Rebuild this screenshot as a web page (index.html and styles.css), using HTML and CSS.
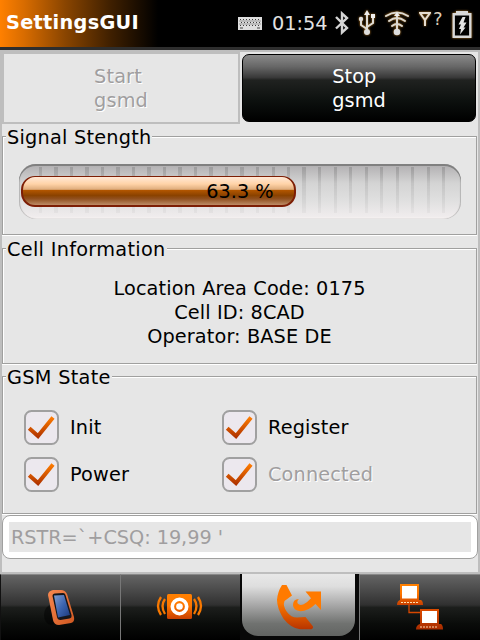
FILE: index.html
```html
<!DOCTYPE html>
<html lang="en">
<head>
<meta charset="utf-8">
<title>SettingsGUI</title>
<link rel="stylesheet" href="styles.css">
</head>
<body>
<header class="topbar">
  <h1 class="title">SettingsGUI</h1>
  <svg class="ic-keyboard" width="24" height="13" viewBox="0 0 24 13"><path fill="#dedede" d="M0 0h24v13H0z"/><path stroke="#404040" stroke-width="1" stroke-dasharray="1 2" d="M2 2.500h21M3 5.500h20M2 8.500h21"/><path stroke="#999" stroke-width="1" d="M1 4h22M1 7h22"/><path stroke="#444" d="M2 11h3M19 11h3"/></svg>
  <span class="clock">01:54</span>
  <svg class="ic-bt" width="16" height="26" viewBox="0 0 16 26"><path fill="none" stroke="#d4d4d4" stroke-width="2.400" d="M2 7L13 18L8 22.500V3.500L13 8L2 18.500"/></svg>
  <svg class="ic-usb glow" width="18" height="26" viewBox="0 0 18 26"><path fill="none" stroke="#dedbd4" stroke-width="2" d="M9 22V4M9 19l-6-4V9M9 17l6-4V6"/><circle cx="9" cy="22" r="3" fill="#ddd"/><circle cx="3" cy="9" r="2.200" fill="#ddd"/><path fill="#eee" d="M9 0l3 5H6zM13 4h4v4h-4z"/></svg>
  <svg class="ic-wifi glow" width="26" height="26" viewBox="0 0 26 26"><g fill="none" stroke="#dcd8d0" stroke-width="2" stroke-linecap="round"><path d="M2 6Q13-1 24 6M5 11q8-6 16 0M8 16q5-4 10 0M13 20V5"/></g><circle cx="13" cy="22" r="3.300" fill="#ddd"/><path fill="#eee" d="M13 2l3 4h-6z"/></svg>
  <svg class="ic-signal glow" width="12" height="16" viewBox="0 0 12 16"><path fill="none" stroke="#e5ddd0" stroke-width="2" d="M1 2h10L6 9zM6 8v7"/></svg>
  <span class="unknown">?</span>
  <svg class="ic-battery glow" width="20" height="28" viewBox="0 0 20 28"><path fill="#000" stroke="#d8d8d8" stroke-width="2.400" d="M1.700 3.200h16.600v22.600H1.700z"/><path fill="#d8d8d8" d="M4 0h12v3H4z"/><path fill="#e4e4e4" d="M10.500 6h3l-2 5.500h3l-3 5h2L8 23.500l1-5.500H7l2-4.500H6.500z"/></svg>
</header>
<main class="panel">
  <div class="actions">
    <button class="btn btn-off" disabled><span>Start<br>gsmd</span></button>
    <button class="btn btn-on"><span>Stop<br>gsmd</span></button>
  </div>
  <section class="group signal">
    <h2>Signal Stength</h2>
    <div class="track"><div class="stripes"></div><div class="fill" style="width:275px"></div><span class="pct">63.3 %</span></div>
  </section>
  <section class="group cell">
    <h2>Cell Information</h2>
    <p>Location Area Code: 0175<br>Cell ID: 8CAD<br>Operator: BASE DE</p>
  </section>
  <section class="group gsm">
    <h2>GSM State</h2>
    <div class="checks">
      <div class="check"><svg class="box" viewBox="0 0 35 35"><use href="#tick"/></svg><span>Init</span></div>
      <div class="check"><svg class="box" viewBox="0 0 35 35"><use href="#tick"/></svg><span>Register</span></div>
      <div class="check"><svg class="box" viewBox="0 0 35 35"><use href="#tick"/></svg><span>Power</span></div>
      <div class="check"><svg class="box" viewBox="0 0 35 35"><use href="#tick"/></svg><span class="dim">Connected</span></div>
    </div>
  </section>
  <div class="field"><div class="value">RSTR=`+CSQ: 19,99 '</div></div>
</main>
<nav class="tabs">
  <div class="tab"><svg width="120" height="66" viewBox="0 0 120 66"><ellipse cx="51" cy="41" rx="7" ry="10" fill="#000" opacity=".45"/><path fill="url(#phoneedge)" d="M48 21q0-4 5-5l8 0q4 0 6 4l7 23q1 5-3 6l-12 2q-5 0-6-5z"/><path fill="#14161c" d="M52.500 22q0-2.500 2.500-2.500l8-.5q2 0 2.500 2l6 20q.5 3-2 3.500l-9 1.500q-3 0-3.500-3z"/><path fill="url(#screen)" d="M54 21.500l10-.5 6 20-12 2.500z"/></svg></div>
  <div class="tab"><svg width="120" height="66" viewBox="0 0 120 66"><rect x="47" y="20" width="25" height="25" rx="1.500" fill="url(#org)"/><circle cx="59.500" cy="32.500" r="7.200" fill="none" stroke="#fff" stroke-width="3.600"/><circle cx="59.500" cy="32.500" r="3.300" fill="#fff"/><path fill="none" stroke="#f87800" stroke-width="2.300" d="M45 25q-5 7 0 15M41 23q-6 9 0 18M74 25q5 7 0 15M78 23q6 9 0 18"/></svg></div>
  <div class="tab active"><svg width="120" height="66" viewBox="0 0 120 66"><path fill="url(#org2)" d="M42 11h4.500l5.500 10.500-7.500 5.500q-2 5 2.500 11 4 5.500 10 5.500l8.500-.5 7.500 9.500v1.500l-1.500 1.200H60q-9-1-16.500-10.500Q37 34 37 26q.5-8 5-15z"/><path fill="#ff7a00" d="M65.500 17.500H81V36l-5.500-6q-7.500 7.300-15 7.300-7.500-.8-7.500-6.300 0-6 6-6-2.500 2-1.300 4.500 2 2.500 6 .7 3.800-2 7.300-6z"/></svg></div>
  <div class="tab last"><svg width="120" height="66" viewBox="0 0 120 66"><path fill="none" stroke="#d84800" stroke-width="1.300" d="M49 31v7.500h13"/><path fill="url(#org)" d="M40 10h19v16h2q2 1 2 5H37q0-4 3-5z"/><path fill="#fff" d="M42 12h15v12.500H42z"/><path stroke="#ffe0b0" stroke-width="1.200" stroke-dasharray="2 1" d="M41 28.500h17"/><path fill="url(#org3)" d="M60 35h19v15h2q2 1 2 5.500H56q0-4.500 4-5.500z"/><path fill="#fff" d="M62 37h15v12H62z"/><path stroke="#ffd8b0" stroke-width="1.200" stroke-dasharray="2 1" d="M60 53h18"/></svg></div>
</nav>
<svg class="defs" width="0" height="0"><defs>
  <linearGradient id="org" x2="0" y2="1"><stop stop-color="#ff8000"/><stop offset=".45" stop-color="#ff7700"/><stop offset="1" stop-color="#c83f00"/></linearGradient>
  <linearGradient id="org2" x2="0" y2="1"><stop offset=".4" stop-color="#ff7a00"/><stop offset="1" stop-color="#b83400"/></linearGradient>
  <linearGradient id="org3" x2="0" y2="1"><stop stop-color="#dc4c00"/><stop offset="1" stop-color="#a82c00"/></linearGradient>
  <linearGradient id="phoneedge" x2="1" y2="1"><stop stop-color="#f88850"/><stop offset="1" stop-color="#d05820"/></linearGradient>
  <linearGradient id="screen" x2="1" y2="1"><stop stop-color="#809dd0"/><stop offset=".5" stop-color="#3d65b0"/><stop offset="1" stop-color="#1c397c"/></linearGradient>
  <linearGradient id="tk" gradientUnits="userSpaceOnUse" x1="0" y1="7" x2="0" y2="29"><stop stop-color="#ff7d00"/><stop offset="1" stop-color="#a82c00"/></linearGradient>
  <g id="tick"><rect x="1" y="1" width="33" height="33" rx="6.500" fill="#ece8ee" stroke="#a0a0a0" stroke-width="2"/><path fill="none" stroke="url(#tk)" stroke-width="4" d="M5.200 18.200L14 26 29 7.500"/></g>
</defs></svg>
</body>
</html>
```
FILE: styles.css
```css
* { box-sizing: border-box; }
body {
  margin: 0;
  width: 480px;
  height: 640px;
  overflow: hidden;
  background: #000;
  color: #000;
  font: 19.3px/24px "DejaVu Sans", sans-serif;
}
svg { display: block; flex: none; }
.defs { position: absolute; }
.topbar {
  height: 50px;
  border-bottom: 3px solid #2e2e2e;
  background: linear-gradient(90deg, #ff8000 0, #d86c00 24px, #8a4500 65px, #402000 110px, #000 158px);
  color: #e2e2e2;
  display: flex;
  align-items: flex-start;
}
.title { margin: 11px 0 0 6px; width: 232px; font-size: 19.3px; letter-spacing: .3px; line-height: 24px; color: #fff; }
.glow { filter: drop-shadow(0 0 1px #b87820); }
.ic-keyboard { margin-top: 17px; }
.clock { margin: 12px 0 0 10px; width: 61px; }
.ic-bt { margin: 10px 0 0 1px; }
.ic-usb { margin: 10px 0 0 8px; }
.ic-wifi { margin: 10px 0 0 8px; }
.ic-signal { margin: 11px 0 0 9px; }
.unknown { margin: 8px 0 0 2px; width: 11px; font-size: 18px; line-height: 22px; color: #d8cbb8; }
.ic-battery { margin: 11px 0 0 8px; }
.panel {
  height: 524px;
  border: 2px solid #bebebe;
  background: #e6e6e6;
}
.actions { display: flex; height: 72px; margin-left: -2px; }
.btn {
  font: inherit;
  padding: 2px 0 0;
  display: flex;
  align-items: center;
  justify-content: center;
  text-align: left;
}
.btn-off {
  width: 240px;
  height: 72px;
  border: solid #bebebe;
  border-width: 2px 2px 2px 4px;
  background: #e6e6e6;
  color: #a09e9f;
  text-shadow: 1px 1px #fff;
  letter-spacing: .15px;
}
.btn-on {
  width: 234px;
  height: 68px;
  margin: 2px 0 0 2px;
  border: 1px solid #000;
  border-radius: 7px;
  background: linear-gradient(#8a8a8a, #666 18%, #393939 34%, #202220 38%, #0c100e 70%, #000);
  color: #fff;
}
.group {
  position: relative;
  width: 475px;
  border: 1px solid #a0a09f;
  box-shadow: inset 1px 1px #fff, 0 1px #fff;
}
.group h2 {
  position: absolute;
  left: 3px;
  top: -11px;
  margin: 0;
  padding: 0 1px;
  background: #e6e6e6;
  font-size: inherit;
  line-height: 24px;
  font-weight: normal;
  letter-spacing: .3px;
}
.signal { height: 99px; margin-top: 12px; padding: 27px 0 0 16px; }
.signal h2 { letter-spacing: .23px; }
.cell { height: 116px; margin-top: 13px; text-align: center; }
.cell p { margin: 28px 0 0; letter-spacing: .12px; }
.gsm { height: 138px; margin-top: 12px; padding: 33px 0 0 21px; }
.track {
  position: relative;
  width: 442px;
  height: 55px;
  padding: 12px 2px;
  border-radius: 17px;
  background: linear-gradient(#b0aeb0, #d4d4d4 35%, #dfdfdf 65%, #f2eeef);
  box-shadow: inset 0 2px #808080, inset -1px 0 1px #b4b4b4, inset 1px 0 1px #b4b4b4, inset 0 -2px #f3efef;
}
.stripes {
  position: absolute;
  left: 20px;
  top: 3px;
  width: 406px;
  height: 46px;
  background: repeating-linear-gradient(90deg, #8888 0 3px, #0000 3px 15.5px);
  -webkit-mask: linear-gradient(#000, #0006 35%, #0002);
  mask: linear-gradient(#000, #0006 35%, #0002);
}
.fill {
  position: relative;
  height: 31px;
  border: 2px solid #7d1e05;
  border-top-width: 1px;
  border-radius: 14px;
  background: linear-gradient(#ffe8d6, #ffd3a8 25%, #dfad7d 44%, #b05500 48%, #8a4200 66%, #905020 78%, #bd8c66);
}
.pct { position: absolute; left: 0; top: 16px; width: 100%; text-align: center; }
.checks { display: grid; grid-template-columns: 198px 1fr; row-gap: 12px; letter-spacing: .15px; }
.check { display: flex; align-items: center; gap: 11px; height: 35px; }
.box { width: 35px; height: 35px; }
.dim { color: #a09e9f; text-shadow: 1px 1px #fff; }
.field {
  width: 476px;
  height: 44px;
  margin-top: 1px;
  padding: 6px;
  border: 1px solid #a0a09f;
  border-radius: 8px;
  background: #fff;
}
.value { height: 30px; padding: 4px 0 0 2px; background: #e6e6e6; color: #a09e9f; letter-spacing: -.05px; }
.tabs { display: grid; grid-template-columns: 120px 120px 119px 121px; height: 66px; background: #080808; }
.tab {
  border-left: 1px solid #777;
  border-top: 1px solid #888;
  background: linear-gradient(#646464, #454545 28%, #303030 46%, #1c1e1c 50%, #0a0c0a 75%, #000);
  overflow: hidden;
}
.tab:first-child { border-left-color: #111; }
.tab svg { margin: -1px 0 0 -1px; }
.tab.last svg { margin-left: 0; }
.tab.active {
  height: 62px;
  width: 113px;
  margin-left: 2px;
  border: 0;
  border-radius: 0 0 16px 16px;
  background: linear-gradient(#e8e8e8, #dedede 20%, #a8a8a8 50%, #707270 80%, #626462);
}
.tab.active svg { margin: 0 0 0 -2px; }
```
